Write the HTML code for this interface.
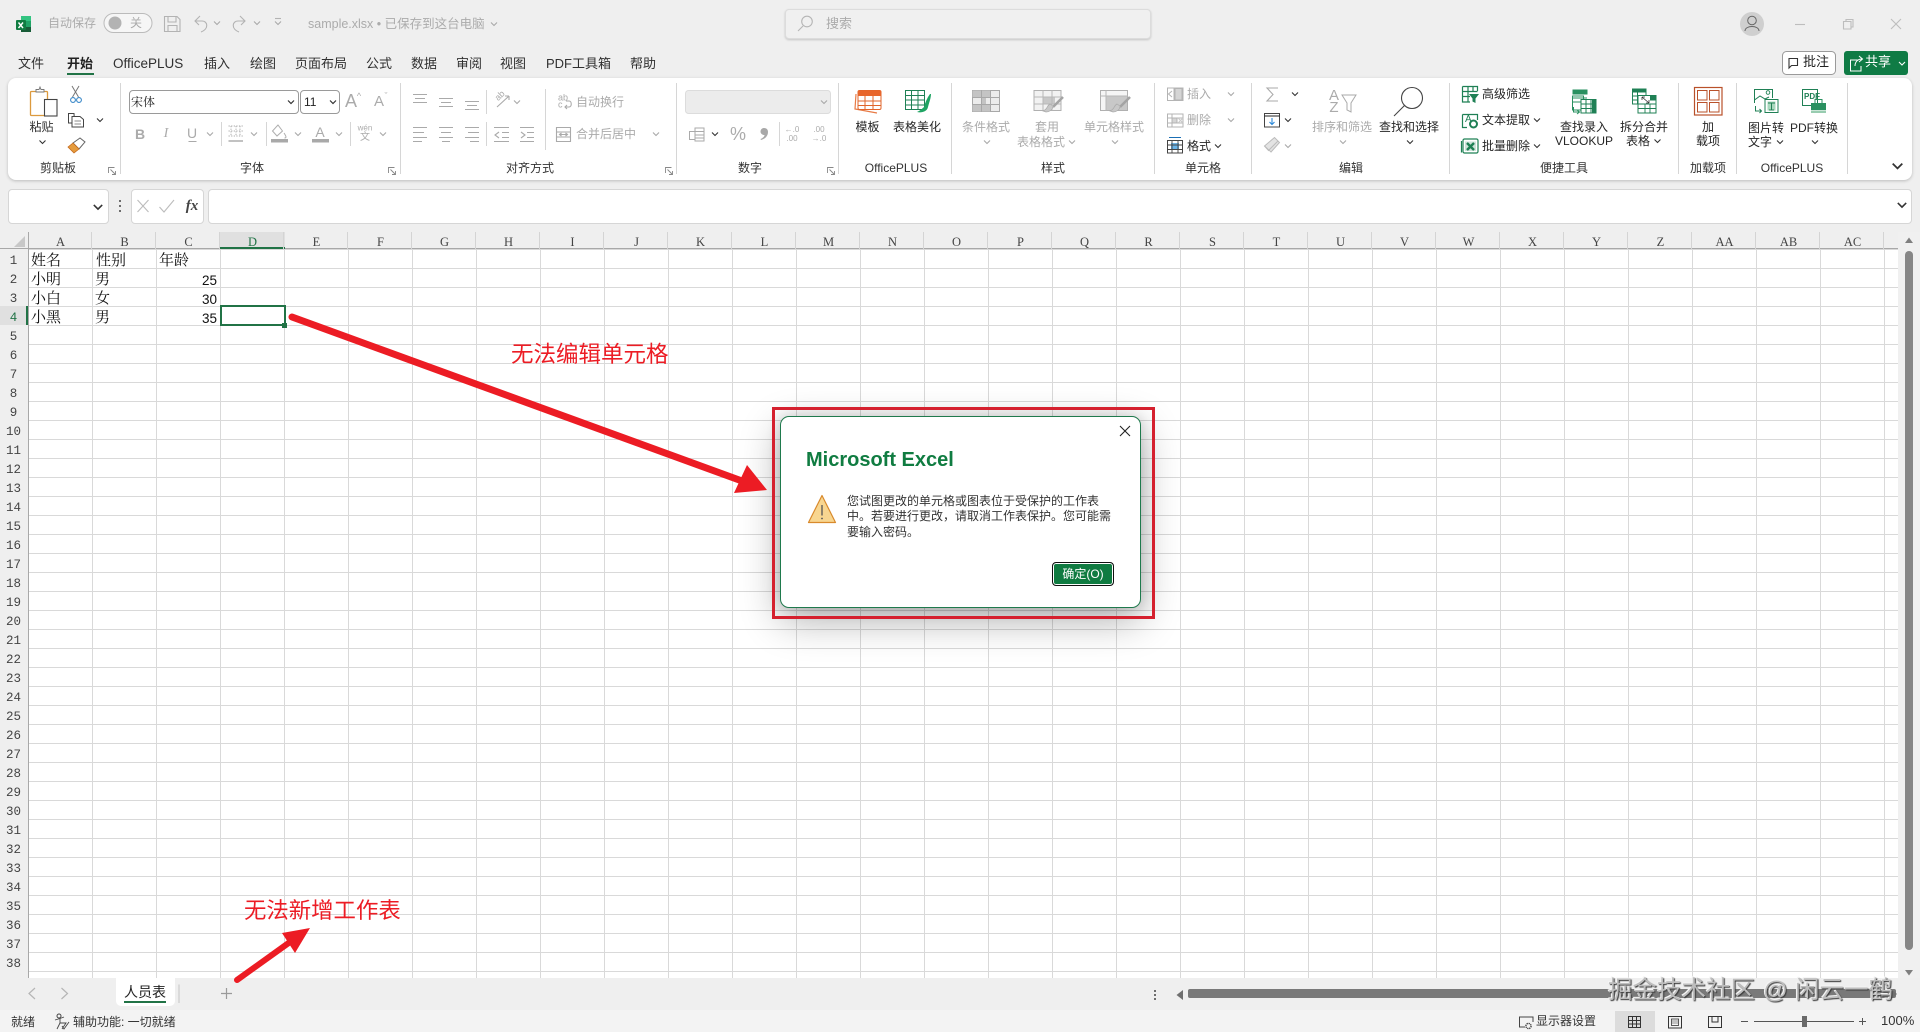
<!DOCTYPE html>
<html lang="zh-CN"><head><meta charset="utf-8"><title>sample.xlsx - Excel</title>
<style>
html,body{margin:0;padding:0;width:1920px;height:1032px;overflow:hidden;background:#efefef}
body{position:relative;font-family:"Liberation Sans","Noto Sans CJK SC",sans-serif;font-size:12px;color:#262626}
.a{position:absolute;box-sizing:border-box}
.t{position:absolute;white-space:nowrap;line-height:16px;transform:translateY(-50%)}
.c{position:absolute;white-space:nowrap;line-height:16px;transform:translate(-50%,-50%);text-align:center}
.g{color:#ababab}
.tab{font-size:13px;color:#303030}
.gl{font-size:12px;color:#333}
.cell{font-family:"Liberation Mono","Noto Serif CJK SC",serif;font-size:15px;color:#111;position:absolute;line-height:18px;transform:translateY(-50%);white-space:nowrap}
.num{font-family:"Liberation Sans",sans-serif;font-size:13.5px}
.ch{position:absolute;left:28px;top:232px;width:1856px;height:17px;display:flex;font-family:"Liberation Serif",serif;font-size:12.5px;color:#444}
.ch span{width:64px;text-align:center;line-height:20px;height:17px;box-sizing:border-box;padding-left:2px;border-right:1px solid #d4d4d4}
.rh{position:absolute;left:0;top:251.5px;width:27px;display:flex;flex-direction:column;font-family:"Liberation Mono",monospace;font-size:12.5px;color:#444}
.rh span{height:19px;line-height:19px;text-align:center;box-sizing:border-box}
.box{background:#fff;border:1px solid #d6d6d6;border-radius:4px}
svg{position:absolute;left:0;top:0}
</style></head><body>

<!-- search -->
<div class="a" style="left:785px;top:9px;width:366px;height:30px;background:#f0f0f0;border:1px solid #dcdcdc;border-radius:4px;box-shadow:0 1px 2px rgba(0,0,0,.18)"></div>

<!-- ribbon -->
<div class="a" style="left:8px;top:78px;width:1904px;height:102px;background:#fff;border-radius:8px;box-shadow:0 1px 3px rgba(0,0,0,.22)"></div>

<!-- formula bar -->
<div class="a box" style="left:8px;top:189px;width:101px;height:35px"></div>
<div class="a box" style="left:131px;top:189px;width:73px;height:35px"></div>
<div class="a box" style="left:208px;top:189px;width:1704px;height:35px"></div>

<!-- grid -->
<div class="a" style="left:28px;top:249px;width:1870px;height:729px;background-color:#fff;background-image:linear-gradient(to right,#d9d9d9 1px,transparent 1px),linear-gradient(to bottom,#d9d9d9 1px,transparent 1px);background-size:64px 19px"></div>
<div class="a" style="left:0;top:248px;width:1898px;height:1px;background:#a8a8a8"></div>
<div class="a" style="left:28px;top:232px;width:1px;height:746px;background:#a8a8a8"></div>
<div class="a" style="left:220px;top:232px;width:65px;height:17px;background:#e0e0e0;border-bottom:2px solid #217346"></div>
<div class="a" style="left:0;top:306px;width:28px;height:19px;background:#e0e0e0;border-right:2px solid #217346"></div>

<div class="ch"><span>A</span><span>B</span><span>C</span><span style="color:#217346">D</span><span>E</span><span>F</span><span>G</span><span>H</span><span>I</span><span>J</span><span>K</span><span>L</span><span>M</span><span>N</span><span>O</span><span>P</span><span>Q</span><span>R</span><span>S</span><span>T</span><span>U</span><span>V</span><span>W</span><span>X</span><span>Y</span><span>Z</span><span>AA</span><span>AB</span><span>AC</span></div>
<div class="rh"><span>1</span><span>2</span><span>3</span><span style="color:#217346">4</span><span>5</span><span>6</span><span>7</span><span>8</span><span>9</span><span>10</span><span>11</span><span>12</span><span>13</span><span>14</span><span>15</span><span>16</span><span>17</span><span>18</span><span>19</span><span>20</span><span>21</span><span>22</span><span>23</span><span>24</span><span>25</span><span>26</span><span>27</span><span>28</span><span>29</span><span>30</span><span>31</span><span>32</span><span>33</span><span>34</span><span>35</span><span>36</span><span>37</span><span>38</span></div>

<!-- cells -->
<span class="cell" style="left:31px;top:262px">姓名</span><span class="cell" style="left:96px;top:262px">性别</span><span class="cell" style="left:159px;top:262px">年龄</span>
<span class="cell" style="left:31px;top:281px">小明</span><span class="cell" style="left:95px;top:281px">男</span><span class="cell num" style="left:202px;top:281px">25</span>
<span class="cell" style="left:31px;top:300px">小白</span><span class="cell" style="left:95px;top:300px">女</span><span class="cell num" style="left:202px;top:300px">30</span>
<span class="cell" style="left:31px;top:319px">小黑</span><span class="cell" style="left:95px;top:319px">男</span><span class="cell num" style="left:202px;top:319px">35</span>
<div class="a" style="left:219.5px;top:305px;width:66px;height:21px;border:2px solid #217346"></div>
<div class="a" style="left:282px;top:323px;width:5px;height:5px;background:#217346;border:0"></div>

<!-- sheet bar + status -->
<div class="a" style="left:0;top:978px;width:1920px;height:32px;background:#efefef"></div>
<div class="a" style="left:1898px;top:232px;width:22px;height:746px;background:#f0f0f0"></div>
<div class="a" style="left:116px;top:978px;width:59px;height:28px;background:#fff;border-radius:0 0 5px 5px"></div>
<div class="a" style="left:124px;top:1001px;width:42px;height:2px;background:#217346"></div>
<div class="a" style="left:0;top:1010px;width:1920px;height:22px;background:#f3f3f3"></div>
<div class="a" style="left:1615px;top:1011px;width:40px;height:21px;background:#dcdcdc"></div>
<div class="a" style="left:1188px;top:989px;width:708px;height:9px;background:#797979;border-radius:2px"></div>
<div class="a" style="left:1905px;top:251px;width:8px;height:699px;background:#868686;border-radius:4px"></div>

<!-- icons -->
<svg width="1920" height="1032" viewBox="0 0 1920 1032" fill="none">
<defs>
<path id="cg" d="M-3 -1.5L0 1.5L3 -1.5" stroke="#a8a8a8" stroke-width="1.1"/>
<path id="cd" d="M-3 -1.5L0 1.5L3 -1.5" stroke="#333" stroke-width="1.1"/>
<path id="ln" d="M0.5 6V0.5H6.5M2.5 2.5L7.500 7.500M7.500 4V7.500H4" stroke="#888" stroke-width=".9"/>
</defs>
<!-- Excel logo -->
<rect x="21" y="16" width="10" height="5" fill="#33c481"/><rect x="21" y="21" width="10" height="6" fill="#21a366"/><rect x="21" y="27" width="10" height="5" fill="#185c37"/>
<rect x="16" y="20" width="10" height="10" rx="1" fill="#107c41"/><path d="M18.5 22.5l4.5 5.5M23 22.5l-4.5 5.5" stroke="#fff" stroke-width="1.4"/>
<!-- toggle -->
<rect x="104" y="13.5" width="48" height="19" rx="9.5" fill="#f6f6f6" stroke="#bbb"/><circle cx="115" cy="23" r="6.5" fill="#b3b3b3"/>
<!-- QAT -->
<g stroke="#b3b3b3" stroke-width="1.1">
<path d="M164.5 16.5H177L180 19.5V31.5H164.5Z"/><path d="M168 16.5V22H176V16.5M168 31.5V25.5H177V31.5"/>
<path d="M200 16L195 21L199 25M195.5 21H202C208 21 209 29 201 32"/>
<path d="M240 16L245 21L241 25M244.5 21H238C232 21 231 29 239 32"/>
<path d="M275 18.5H281"/>
</g>
<use href="#cg" x="217" y="23"/><use href="#cg" x="257" y="23"/><use href="#cg" x="278" y="23"/><use href="#cg" x="494" y="24"/>
<!-- search icon -->
<circle cx="807" cy="21.5" r="5.3" stroke="#b5b5b5" stroke-width="1.1"/><path d="M803 26L798 31" stroke="#b5b5b5" stroke-width="1.1"/>
<!-- win controls -->
<circle cx="1752" cy="24" r="12" fill="#cfcfcf"/><circle cx="1752" cy="20.5" r="4.3" stroke="#666" stroke-width="1"/><path d="M1745 31C1745 25 1759 25 1759 31" stroke="#666" stroke-width="1"/>
<path d="M1795 24.5H1805" stroke="#bdbdbd" stroke-width="1.1"/>
<path d="M1843.5 21.5H1851V29H1843.5ZM1846 21.5V19.5H1853V27H1851" stroke="#bdbdbd" stroke-width="1.1"/>
<path d="M1891 19L1901 29M1901 19L1891 29" stroke="#bdbdbd" stroke-width="1.1"/>
<!-- comment / share -->
<rect x="1782.5" y="51.5" width="53" height="23" rx="4" fill="#fff" stroke="#9a9a9a"/>
<path d="M1788.5 58.5H1797.5V65.5H1791.5L1789 68V58.5Z" stroke="#333" stroke-width="1.1"/>
<rect x="1844" y="51" width="64" height="24" rx="3" fill="#0f7b45"/>
<path d="M1857.5 60H1850.5V71H1861V66M1855 66C1855 61.5 1858 59 1862 59M1859 56L1862.5 59L1859 62" stroke="#fff" stroke-width="1"/>
<path d="M1899 62L1902 65L1905 62" stroke="#fff" stroke-width="1.1"/>
<!-- separators -->
<g stroke="#d6d6d6"><path d="M120.5 83V174M400.5 83V174M676.5 83V174M838.5 83V174M951.5 83V174M1154.5 83V174M1251.5 83V174M1449.5 83V174M1678.5 83V174M1736.5 83V174M1847.5 83V174"/><path d="M221.5 122V146M266.5 122V146M350.5 122V146M486.5 90V114M486.5 122V146M545.5 89V150M779.5 122V146"/></g>
<!-- dialog launchers -->
<use href="#ln" x="108" y="167"/><use href="#ln" x="388" y="167"/><use href="#ln" x="665" y="167"/><use href="#ln" x="827" y="167"/>
<!-- clipboard -->
<rect x="30.5" y="91.5" width="17" height="24" rx="1" fill="#fff" stroke="#dc9a3e" stroke-width="1.3"/>
<path d="M36 92V89.5H39L40 87L41 89.5H44V92Z" fill="#fff" stroke="#777" stroke-width=".9"/>
<rect x="44.5" y="99.5" width="12.5" height="16.5" fill="#fff" stroke="#444" stroke-width="1.1"/>
<use href="#cd" x="42.500" y="142"/>
<path d="M72 86L78.500 97M79 86L72.500 97" stroke="#777" stroke-width="1"/><circle cx="73" cy="100" r="2.400" stroke="#3a88c8" stroke-width="1.100"/><circle cx="79" cy="100" r="2.400" stroke="#3a88c8" stroke-width="1.100"/>
<path d="M68.500 113.500H74L74.500 123H68.500Z" stroke="#444"/><path d="M72 116.500H80L83.500 119.500V127H72Z" fill="#fff" stroke="#444"/><path d="M74.500 121H81M74.500 124H81" stroke="#666" stroke-width=".8"/>
<use href="#cd" x="100" y="120"/>
<path d="M73 143L80 138L85 142L79 149Z" fill="#fff" stroke="#666"/><path d="M68 147L73 143L79 149L74 153Z" fill="#e59b3d" stroke="#c56a1e" stroke-width=".8"/>
<!-- font row icons -->
<g stroke="#aeaeae" stroke-width="1">
<path d="M228.500 126H243M228.500 131H243M228.500 136H243M236 126V136M231 126V136M240 126V136" stroke-dasharray="1.300 1.300"/><path d="M228.500 141H243" stroke="#999" stroke-width="1.200"/>
<path d="M278 125L272.500 131L277 136L282.500 131Z"/><path d="M284 133C286 136 287 138 284.500 138"/>
</g>
<rect x="271" y="139" width="17" height="3.500" fill="#a9a9a9"/><rect x="312" y="139" width="17" height="3.500" fill="#a9a9a9"/>
<path d="M188.500 141.500H196.500" stroke="#aaa" stroke-width="1"/>
<use href="#cg" x="210" y="134"/><use href="#cg" x="254" y="134"/><use href="#cg" x="298" y="134"/><use href="#cg" x="339" y="134"/><use href="#cg" x="383" y="134"/>
<!-- align -->
<g stroke="#aaa" stroke-width="1.100">
<path d="M413 94.500H427M415 98.500H425M413 102.500H427"/>
<path d="M439 98.500H453M441 102.500H451M439 106.500H453"/>
<path d="M465 101.500H479M467 105.500H477M465 109.500H479"/>
<path d="M413 127.500H427M413 132.500H424M413 137.500H427M413 141.500H422"/>
<path d="M439 127.500H453M441 132.500H451M439 137.500H453M442 141.500H450"/>
<path d="M465 127.500H479M468 132.500H479M465 137.500H479M470 141.500H479"/>
<path d="M494 127.500H509M502 132.500H509M502 137.500H509M494 141.500H509M499 132L495 135L499 138"/>
<path d="M520 127.500H534M527 132.500H534M527 137.500H534M520 141.500H534M521 132L525 135L521 138"/>
<path d="M497 107L509 96M509 96H505M509 96V100"/>
<path d="M556.500 127.500H570.500V141.500H556.500Z"/><path d="M556.500 132H570.500M556.500 137H570.500M560 134.500H567M561.500 133L559.500 134.500L561.500 136M565.500 133L567.500 134.500L565.500 136"/>
<path d="M566 101H569C572 101 572 107 569 107H565M567 105L565 107L567 109"/>
</g>
<use href="#cg" x="517" y="102"/><use href="#cg" x="656" y="134"/>
<!-- number -->
<rect x="685.500" y="90.500" width="145" height="23" rx="3" fill="#ececec" stroke="#dcdcdc"/><use href="#cg" x="824" y="102"/>
<g stroke="#aaa" stroke-width="1"><rect x="689.500" y="131.500" width="13" height="8"/><rect x="695" y="128" width="9" height="13" fill="#fff"/><path d="M695 131.500H704M695 135H704M695 138H704"/></g>
<use href="#cd" x="715" y="134"/>
<path d="M764 128C767 128 768 130 768 132C768 136 765 139 761 140L760.500 139C763 138 764.500 136.500 764.500 135C762 135 760.500 133.500 760.500 131.500C760.500 129.500 762 128 764 128Z" fill="#a8a8a8"/>
<!-- OfficePLUS templates -->
<path d="M856 94L855 109L877 113" stroke="#e87a45" stroke-width="1.200"/>
<rect x="858" y="90.500" width="23" height="19" rx="1.500" fill="#fff" stroke="#e0652b"/><rect x="858" y="90.500" width="23" height="5.500" fill="#e8662c"/><path d="M858 101H881M858 105.500H881M865 96V109.500M873 96V109.500" stroke="#e0652b"/>
<rect x="905.500" y="90.500" width="19" height="19" fill="#fff" stroke="#1f8055"/><path d="M905.500 95.500H924.500M905.500 100H924.500M905.500 105H924.500M911.500 90.500V109.500M918 90.500V109.500" stroke="#1f8055"/>
<path d="M930 94C927 98 925 103 924 107C921 110 919 111 917 112C921 113 927 112 928 107C929 103 931 98 931 94Z" fill="#1fa463"/>
<!-- styles -->
<rect x="972.500" y="90.500" width="27" height="21" fill="#ececec" stroke="#a8a8a8"/><path d="M981.500 90.500H990.500V97.500H981.500ZM981.500 97.500H986V104.500H981.500ZM972.500 104.500H990.500V111.500H972.500ZM972.500 90.500H981.500V97.500H972.500Z" fill="#c4c4c4"/><path d="M972.500 97.500H999.500M972.500 104.500H999.500M981.500 90.500V111.500M990.500 90.500V111.500" stroke="#a8a8a8"/>
<rect x="1034" y="90.500" width="27" height="20" fill="#f2f2f2" stroke="#b0b0b0"/><rect x="1043" y="97" width="12" height="7" fill="#c8c8c8"/><path d="M1034 97H1061M1034 104H1061M1043 90.500V110.500M1052 90.500V110.500" stroke="#b8b8b8"/>
<path d="M1063 97L1053 107" stroke="#a4a4a4" stroke-width="2.600"/><path d="M1046 112C1049 112 1053 110 1053 106L1050 104C1047 105 1048 109 1043 111Z" fill="#c8c8c8" stroke="#aaa" stroke-width=".7"/>
<rect x="1100.500" y="90.500" width="27" height="20" fill="#f5f5f5" stroke="#b0b0b0"/><rect x="1106" y="96" width="21" height="14" fill="#c8c8c8"/><path d="M1100.500 96H1127.500M1106 90.500V110.500" stroke="#b8b8b8"/>
<path d="M1130 97L1120 107" stroke="#a4a4a4" stroke-width="2.600"/><path d="M1113 112C1116 112 1120 110 1120 106L1117 104C1114 105 1115 109 1110 111Z" fill="#c8c8c8" stroke="#aaa" stroke-width=".7"/>
<use href="#cg" x="987" y="142"/><use href="#cg" x="1072" y="142"/><use href="#cg" x="1115" y="142"/>
<!-- cells -->
<g stroke="#b4b4b4" stroke-width="1">
<path d="M1167.500 88H1183V100.500H1167.500ZM1174 88V100.500M1178.500 88V100.500M1174 92.500H1183M1174 96.500H1183"/><rect x="1175" y="88.500" width="7" height="11.500" fill="#d5d5d5"/>
<path d="M1172 91L1168.500 94L1172 97"/>
<path d="M1167.500 114H1183V127H1167.500ZM1167.500 118H1183M1167.500 123H1183M1172 114V127"/><rect x="1172" y="118" width="5" height="5" fill="#d5d5d5"/><path d="M1178 118L1183 123M1183 118L1178 123" stroke="#c9c9c9"/>
</g>
<rect x="1167.500" y="140.500" width="15" height="12.500" fill="#fff" stroke="#444"/><rect x="1171" y="143" width="8" height="7" fill="#69b3e7"/><path d="M1167.500 145H1183M1167.500 149.500H1183M1172 140.500V153M1178 140.500V153" stroke="#444" stroke-width=".9"/><path d="M1169 137.500H1181" stroke="#1a6fb5" stroke-width="1"/>
<use href="#cg" x="1231" y="94"/><use href="#cg" x="1231" y="120"/><use href="#cd" x="1218" y="146"/>
<!-- editing -->
<path d="M1278 88H1267L1273 94.500L1267 101H1278" stroke="#aaa" stroke-width="1.100"/>
<rect x="1264.500" y="113.500" width="15" height="13.500" fill="#fff" stroke="#444"/><path d="M1264.500 116H1279.500" stroke="#222"/><path d="M1272 118V124.500M1269.500 122L1272 124.500L1274.500 122" stroke="#2b88d8" stroke-width="1.100"/>
<path d="M1264.500 146L1274.500 137.500L1279.500 142.500L1271 152Z" fill="#e3e3e3" stroke="#bbb"/><path d="M1264.500 146L1268.500 150.500L1278 141" stroke="#bbb"/>
<use href="#cd" x="1295" y="94"/><use href="#cd" x="1288" y="120"/><use href="#cg" x="1288" y="146"/>
<path d="M1342 95H1356L1351 103V112L1347 110V103Z" fill="#fff" stroke="#aaa"/>
<use href="#cg" x="1343" y="142"/>
<circle cx="1412" cy="98" r="10.500" stroke="#444" stroke-width="1.100"/><path d="M1404.500 105.500L1394 116" stroke="#444" stroke-width="1.100"/>
<use href="#cd" x="1410" y="142"/>
<!-- tools -->
<g stroke="#1f8055" stroke-width="1.200">
<path d="M1462.500 86.500H1477.500V91M1462.500 86.500V102H1470M1462.500 91.500H1477.500M1462.500 96.500H1470M1468 86.500V102M1473 86.500V91.500"/>
<path d="M1462.500 114.500H1477.500V120M1462.500 114.500V127.500H1467"/>
<rect x="1463" y="139" width="15" height="14" rx="1.500"/><path d="M1461.500 141V152.500"/>
</g>
<path d="M1469 94H1479L1475.500 98.500V103L1472.500 101.500V98.500Z" fill="#1f8055"/>
<circle cx="1473.500" cy="124" r="3.500" fill="#fff" stroke="#1f8055" stroke-width="2"/>
<rect x="1465" y="141.500" width="11" height="9.500" fill="#1f8055" fill-opacity=".22"/>
<path d="M1467 143L1474 150M1474 143L1467 150" stroke="#1f8055" stroke-width="2.400"/>
<use href="#cd" x="1537" y="120"/><use href="#cd" x="1537" y="146"/>
<!-- vlookup -->
<rect x="1572.500" y="96" width="11" height="14" fill="#fff" stroke="#2a9060"/><rect x="1572.500" y="89.500" width="15" height="5" fill="#2a9060"/><path d="M1572.500 98H1587M1572.500 102H1587" stroke="#2a9060"/>
<rect x="1581" y="99.500" width="15" height="13.500" fill="#fff" stroke="#1f8055"/><rect x="1592" y="99.500" width="4" height="13.500" fill="#1f8055"/><path d="M1581 104H1596M1581 108.500H1596M1586 99.500V113M1591 99.500V113" stroke="#1f8055"/><path d="M1573.500 107V112H1579M1577 110L1579.500 112L1577 114" stroke="#2a9060"/>
<path d="M1632.500 89H1646V104H1632.500Z" fill="#fff" stroke="#1f8055"/><rect x="1632.500" y="89" width="13.500" height="3.500" fill="#1f8055"/><path d="M1632.500 96H1638M1632.500 100H1638M1637.500 89V104" stroke="#1f8055"/>
<rect x="1638" y="95.500" width="18" height="17.500" fill="#fff" stroke="#1f8055"/><rect x="1650" y="95.500" width="6" height="5" fill="#1f8055"/><path d="M1638 104H1656M1638 108.500H1656M1645 104V113M1650 104V113" stroke="#1f8055" stroke-width=".9"/><path d="M1642 97L1649 103M1642 97H1645M1642 97V100M1649 103H1646M1649 103V100" stroke="#333" stroke-width=".8"/>
<use href="#cd" x="1657.500" y="141"/>
<!-- addins -->
<rect x="1694.500" y="87.500" width="27.500" height="27.500" stroke="#b9512a" stroke-width="1.200"/><rect x="1697.500" y="90.500" width="9.500" height="9.500" stroke="#b9512a"/><rect x="1709.500" y="90.500" width="9.500" height="9.500" stroke="#b9512a"/><rect x="1697.500" y="102.500" width="9.500" height="9.500" stroke="#b9512a"/><rect x="1709.500" y="102.500" width="9.500" height="9.500" stroke="#b9512a"/>
<!-- image/pdf -->
<path d="M1754.500 103V89.500H1772.500V98M1754.500 100L1760 96L1765 99L1769 97" stroke="#1f8055"/><circle cx="1768" cy="92.500" r="1.800" stroke="#1f8055" stroke-width=".9"/>
<rect x="1765" y="99.500" width="13" height="13" fill="#fff" stroke="#1f8055"/><rect x="1767.500" y="101.500" width="8" height="9" fill="#a8d8bd"/><path d="M1768 103H1775M1771.500 103V110M1769 110H1774" stroke="#1f8055"/><path d="M1755.500 106V111H1761.500M1759.500 109L1761.500 111L1759.500 113" stroke="#1f8055"/>
<use href="#cd" x="1780" y="142"/>
<rect x="1802.500" y="89.500" width="15" height="16" fill="#fff" stroke="#1f8055"/>
<rect x="1811" y="103" width="15" height="7" fill="#2a9060"/><rect x="1815" y="99.500" width="7" height="4" stroke="#2a9060"/><rect x="1811" y="110.500" width="15" height="2.500" fill="#98ccb0"/>
<use href="#cd" x="1815" y="142"/>
<use href="#cd" x="1897.500" y="166" transform="translate(1897.500 166) scale(1.600) translate(-1897.500 -166)"/>
<!-- formula bar -->
<use href="#cd" x="98" y="207" transform="translate(98 207) scale(1.400) translate(-98 -207)"/>
<circle cx="120" cy="201" r="1" fill="#444"/><circle cx="120" cy="206" r="1" fill="#444"/><circle cx="120" cy="211" r="1" fill="#444"/>
<path d="M137.500 200L148.500 212M148.500 200L137.500 212" stroke="#bcbcbc" stroke-width="1.100"/>
<path d="M159.500 207L164 212L174 200" stroke="#bcbcbc" stroke-width="1.100"/>
<use href="#cd" x="1902" y="205" transform="translate(1902 205) scale(1.400) translate(-1902 -205)"/>
<!-- corner -->
<path d="M25 236V247H14Z" fill="#c8c8c8"/>
<!-- scroll arrows -->
<path d="M1905 243L1909 237.500L1913 243Z" fill="#7f7f7f"/>
<path d="M1905 970L1909 975.500L1913 970Z" fill="#7f7f7f"/>
<path d="M1183 990V1000L1176.500 995Z" fill="#6f6f6f"/><path d="M1891 989V999L1897 994Z" fill="#6f6f6f"/>
<circle cx="1155" cy="991" r="1" fill="#444"/><circle cx="1155" cy="995" r="1" fill="#444"/><circle cx="1155" cy="999" r="1" fill="#444"/>
<!-- sheet nav -->
<path d="M35 988L29 993.500L35 999M61.500 988L67.500 993.500L61.500 999" stroke="#b5b5b5" stroke-width="1.200"/>
<path d="M179 984.500V1003" stroke="#c4c4c4"/>
<path d="M226.500 988V999M221 993.500H232" stroke="#9a9a9a" stroke-width="1.200"/>
<!-- status icons -->
<circle cx="59" cy="1016" r="2" stroke="#444"/><path d="M55 1020L60 1018.500L64 1017M60 1018.500L60 1023L57 1029M60 1023L66 1023L62 1029M62 1026L64 1029L69 1022" stroke="#444" stroke-width=".9"/>
<path d="M1525 1027H1519.500V1017H1533V1022" stroke="#444"/><circle cx="1528.500" cy="1026" r="2.600" stroke="#444" stroke-width="1.400" stroke-dasharray="1.300 .7"/>
<rect x="1628.500" y="1016.500" width="12" height="11" stroke="#333"/><path d="M1628.500 1020.500H1640.500M1628.500 1024H1640.500M1632.500 1016.500V1027.500M1636.500 1016.500V1027.500" stroke="#333"/>
<rect x="1668.500" y="1016.500" width="13" height="11.500" stroke="#333"/><rect x="1671.500" y="1019" width="7" height="6.500" stroke="#333" stroke-width=".8"/><path d="M1672 1021H1678M1672 1023H1678" stroke="#333" stroke-width=".6"/>
<path d="M1708.500 1016.500H1721.500V1027.500H1708.500ZM1712 1016.500V1022H1718V1016.500" stroke="#333"/>
<path d="M1741 1021.500H1748M1754 1021.500H1854M1859 1021.500H1866M1862.500 1018V1025" stroke="#555"/>
<rect x="1802" y="1016" width="5" height="11" fill="#6a6a6a"/>
</svg>

<!-- title bar text -->
<span class="t g" style="left:48px;top:23px;font-size:12px">自动保存</span>
<span class="t g" style="left:130px;top:23px;font-size:12px">关</span>
<span class="t g" style="left:308px;top:24px;font-size:12.5px">sample.xlsx • 已保存到这台电脑</span>
<span class="t g" style="left:826px;top:24px;font-size:13px">搜索</span>

<!-- tabs -->
<span class="t tab" style="left:18px;top:63.5px">文件</span>
<span class="t tab" style="left:67px;top:63.5px;font-weight:bold;color:#222">开始</span>
<div class="a" style="left:67px;top:73px;width:27px;height:2px;background:#217346"></div>
<span class="t tab" style="left:113px;top:63.5px;font-size:13.5px">OfficePLUS</span>
<span class="t tab" style="left:204px;top:63.5px">插入</span>
<span class="t tab" style="left:250px;top:63.5px">绘图</span>
<span class="t tab" style="left:295px;top:63.5px">页面布局</span>
<span class="t tab" style="left:366px;top:63.5px">公式</span>
<span class="t tab" style="left:411px;top:63.5px">数据</span>
<span class="t tab" style="left:456px;top:63.5px">审阅</span>
<span class="t tab" style="left:500px;top:63.5px">视图</span>
<span class="t tab" style="left:546px;top:63.5px">PDF工具箱</span>
<span class="t tab" style="left:630px;top:63.5px">帮助</span>
<span class="t" style="left:1803px;top:62px;font-size:13px;color:#222">批注</span>
<span class="t" style="left:1865px;top:62px;font-size:13px;color:#fff">共享</span>

<!-- group labels -->
<span class="c gl" style="left:58px;top:168px">剪贴板</span>
<span class="c gl" style="left:252px;top:168px">字体</span>
<span class="c gl" style="left:530px;top:168px">对齐方式</span>
<span class="c gl" style="left:750px;top:168px">数字</span>
<span class="c gl" style="left:896px;top:168px">OfficePLUS</span>
<span class="c gl" style="left:1053px;top:168px">样式</span>
<span class="c gl" style="left:1203px;top:168px">单元格</span>
<span class="c gl" style="left:1351px;top:168px">编辑</span>
<span class="c gl" style="left:1564px;top:168px">便捷工具</span>
<span class="c gl" style="left:1708px;top:168px">加载项</span>
<span class="c gl" style="left:1792px;top:168px">OfficePLUS</span>

<!-- clipboard + font -->
<span class="c" style="left:41.500px;top:127px;color:#333">粘贴</span>
<div class="a" style="left:128.500px;top:90px;width:170px;height:24px;background:#fff;border:1px solid #9a9a9a;border-radius:4px"></div>
<div class="a" style="left:300px;top:90px;width:40px;height:24px;background:#fff;border:1px solid #9a9a9a;border-radius:4px"></div>
<span class="t" style="left:131px;top:102px;font-size:12px;font-family:'Noto Serif CJK SC',serif;color:#222">宋体</span>
<span class="t" style="left:304px;top:102px;font-size:12px;color:#222">11</span>
<svg width="350" height="110" viewBox="0 0 350 110" fill="none"><path d="M288 100.500L291 103.500L294 100.500M330 100.500L333 103.500L336 100.500" stroke="#333" stroke-width="1.200"/></svg>
<span class="c g" style="left:351px;top:101px;font-size:18px">A</span><span class="c g" style="left:359px;top:96px;font-size:9px">^</span>
<span class="c g" style="left:379px;top:102px;font-size:15px">A</span><span class="c g" style="left:386px;top:96px;font-size:9px">ˇ</span>
<span class="c g" style="left:140px;top:134px;font-size:14px;font-weight:bold">B</span>
<span class="c g" style="left:166px;top:134px;font-size:14px;font-style:italic;font-family:'Liberation Serif',serif">I</span>
<span class="c g" style="left:192px;top:133px;font-size:14px">U</span>
<span class="c g" style="left:320px;top:132px;font-size:14px">A</span>
<span class="c g" style="left:365px;top:128px;font-size:8px;line-height:9px">wén</span>
<span class="c g" style="left:365px;top:138px;font-size:10px;line-height:10px">文</span>
<span class="t g" style="left:576px;top:102px">自动换行</span>
<span class="t g" style="left:576px;top:134px">合并后居中</span>
<span class="t g" style="left:558px;top:98px;font-size:9px;line-height:9px">ab</span>
<span class="t g" style="left:558px;top:105px;font-size:9px;line-height:9px">c</span>
<span class="c g" style="left:500px;top:96px;font-size:9px;line-height:9px;transform:translate(-50%,-50%) rotate(-45deg)">ab</span>

<!-- number -->
<span class="c g" style="left:738px;top:134px;font-size:18px">%</span>
<span class="c g" style="left:792px;top:134px;font-size:8px;line-height:9px">←.0<br>.00</span>
<span class="c g" style="left:819px;top:134px;font-size:8px;line-height:9px">.00<br>→.0</span>

<!-- big labels -->
<span class="c" style="left:867.500px;top:127px">模板</span>
<span class="c" style="left:917px;top:127px">表格美化</span>
<span class="c g" style="left:986px;top:127px">条件格式</span>
<span class="c g" style="left:1047px;top:127px">套用</span>
<span class="c g" style="left:1041px;top:142px">表格格式</span>
<span class="c g" style="left:1114px;top:127px">单元格样式</span>
<span class="t g" style="left:1187px;top:94px">插入</span>
<span class="t g" style="left:1187px;top:120px">删除</span>
<span class="t" style="left:1187px;top:146px">格式</span>
<span class="c g" style="left:1334px;top:96px;font-size:15px">A</span>
<span class="c g" style="left:1334px;top:108px;font-size:15px">Z</span>
<span class="c g" style="left:1342px;top:127px">排序和筛选</span>
<span class="c" style="left:1409px;top:127px">查找和选择</span>
<span class="t" style="left:1482px;top:94px">高级筛选</span>
<span class="t" style="left:1482px;top:120px">文本提取</span>
<span class="t" style="left:1482px;top:146px">批量删除</span>
<span class="t" style="left:1465px;top:120px;font-size:10px;color:#1f8055">A</span>
<span class="c" style="left:1584px;top:127px">查找录入</span>
<span class="c" style="left:1584px;top:141px">VLOOKUP</span>
<span class="c" style="left:1644px;top:127px">拆分合并</span>
<span class="c" style="left:1638px;top:141px">表格</span>
<span class="c" style="left:1708px;top:127px">加</span>
<span class="c" style="left:1708px;top:141px">载项</span>
<span class="c" style="left:1766px;top:128px">图片转</span>
<span class="c" style="left:1760px;top:142px">文字</span>
<span class="c" style="left:1814px;top:128px">PDF转换</span>
<span class="t" style="left:1804px;top:97px;font-size:8px;color:#1f8055;font-weight:bold">PDF</span>
<span class="c" style="left:192px;top:206px;font-size:15px;font-style:italic;font-family:'Liberation Serif',serif;font-weight:bold;color:#444">fx</span>

<!-- sheet + status text -->
<span class="t" style="left:124px;top:992px;font-size:14px;color:#222">人员表</span>
<span class="t" style="left:11px;top:1022px;color:#333">就绪</span>
<span class="t" style="left:73px;top:1022px;color:#333">辅助功能: 一切就绪</span>
<span class="t" style="left:1536px;top:1021px;color:#333">显示器设置</span>
<span class="t" style="left:1881px;top:1021px;font-size:13px;color:#333">100%</span>

<!-- dialog -->
<div class="a" style="left:780px;top:416px;width:361px;height:192px;background:#fff;border:1px solid #1f7a4d;border-radius:9px;box-shadow:0 12px 40px rgba(0,0,0,.32),0 0 14px rgba(0,0,0,.14)"></div>
<div class="a" style="left:772px;top:407px;width:383px;height:212px;border:3px solid #d5202e"></div>
<span class="t" style="left:806px;top:460px;font-size:20px;line-height:26px;font-weight:bold;color:#107c41">Microsoft Excel</span>
<svg width="1920" height="1032" viewBox="0 0 1920 1032" fill="none">
<path d="M1120 426L1130 436M1130 426L1120 436" stroke="#222" stroke-width="1.100"/>
<path d="M822 495.500L835.500 522.500H808.500Z" fill="#f8d690" stroke="#d98a2c" stroke-width="1.200" stroke-linejoin="round"/>
<path d="M822 505V515.500" stroke="#555" stroke-width="1.300"/><circle cx="822" cy="518.500" r=".9" fill="#555"/>
</svg>
<div class="a" style="left:847px;top:493.5px;width:270px;font-size:12px;line-height:15.500px;color:#333">您试图更改的单元格或图表位于受保护的工作表<br>中。若要进行更改，请取消工作表保护。您可能需<br>要输入密码。</div>
<div class="a" style="left:1052px;top:562px;width:62px;height:24px;background:#0f7b41;border:1px solid #111;border-radius:4px;box-shadow:inset 0 0 0 1px #fff;color:#fff;text-align:center;line-height:22px;font-size:12px">确定(O)</div>

<!-- annotations -->
<span class="t" style="left:511px;top:353px;font-size:22.500px;line-height:30px;color:#ec1c24;font-family:'Noto Sans CJK SC',sans-serif">无法编辑单元格</span>
<span class="t" style="left:244px;top:909px;font-size:22.400px;line-height:30px;color:#ec1c24;font-family:'Noto Sans CJK SC',sans-serif">无法新增工作表</span>
<svg width="1920" height="1032" viewBox="0 0 1920 1032" fill="none">
<path d="M292 317L742 481" stroke="#ec1c24" stroke-width="7" stroke-linecap="round"/>
<path d="M767 490L734 493L747 465Z" fill="#ec1c24"/>
<path d="M237 980L290 942" stroke="#ec1c24" stroke-width="6" stroke-linecap="round"/>
<path d="M310 928L282 933L295 953Z" fill="#ec1c24"/>
</svg>

<!-- watermark -->
<span class="t" style="left:1608px;top:991px;font-size:24.500px;line-height:30px;color:#bdbdbd;text-shadow:1px 1px 1px #3a3a3a,-1px -1px 0 #f4f4f4">掘金技术社区</span>
<span class="t" style="left:1763px;top:991px;font-size:24.500px;line-height:30px;color:#bdbdbd;text-shadow:1px 1px 1px #3a3a3a,-1px -1px 0 #f4f4f4">@</span>
<span class="t" style="left:1795px;top:991px;font-size:24.500px;line-height:30px;color:#bdbdbd;text-shadow:1px 1px 1px #3a3a3a,-1px -1px 0 #f4f4f4">闲云一鹤</span>
</body></html>
